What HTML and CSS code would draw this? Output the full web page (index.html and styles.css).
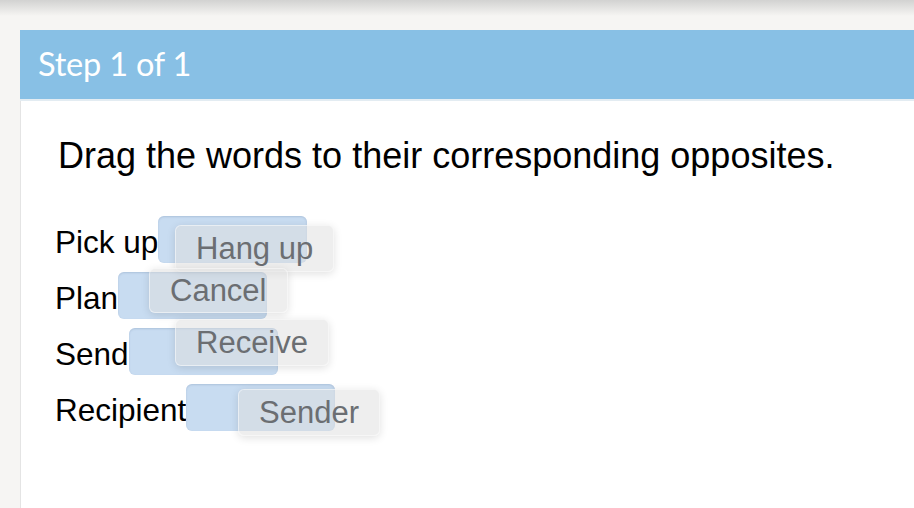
FILE: index.html
```html
<!DOCTYPE html>
<html lang="en">
<head>
  <meta charset="UTF-8" />
  <title>Match the opposites</title>
  <link rel="stylesheet" href="styles.css">
</head>
<body>
  <div class="top-shadow"></div>

  <div class="panel">
    <div class="panel-head">Step 1 of 1</div>
    <div class="panel-body">
      <p class="prompt">Drag the words to their corresponding opposites.</p>

      <div class="pairs">
        <div class="pair">
          <span class="word">Pick up</span>
          <span class="slot"></span>
        </div>
        <div class="pair">
          <span class="word">Plan</span>
          <span class="slot"></span>
        </div>
        <div class="pair">
          <span class="word">Send</span>
          <span class="slot"></span>
        </div>
        <div class="pair">
          <span class="word">Recipient</span>
          <span class="slot"></span>
        </div>

        <!-- cards mid-drag, floating over the slots -->
        <div class="card card-hang">Hang up</div>
        <div class="card card-cancel">Cancel</div>
        <div class="card card-receive">Receive</div>
        <div class="card card-sender">Sender</div>
      </div>
    </div>
  </div>
</body>
</html>
```

FILE: styles.css
```css
* {
  margin: 0;
  padding: 0;
  box-sizing: border-box;
}
html, body {
  height: 100%;
  overflow: hidden;
}
body {
  background: #f6f5f3;
  font-family: "Liberation Sans", Arial, sans-serif;
  position: relative;
}
.top-shadow {
  position: absolute;
  top: 0;
  left: 0;
  right: 0;
  height: 16px;
  background: linear-gradient(#d2d2d1, #f6f5f3);
}
.panel {
  margin: 30px 0 0 20px;
  height: 478px;
  background: #fff;
  border-left: 1px solid #e4e4e4;
  position: relative;
}
.panel-head {
  height: 71px;
  margin-left: -1px;
  background: #88c0e5;
  border-bottom: 2px solid #e3ecf2;
  color: #fff;
  font-family: Lato, "Open Sans", sans-serif;
  font-size: 32.5px;
  letter-spacing: -0.2px;
  padding: 14px 0 0 18px;
}
.panel-body {
  padding: 34px 0 0 34px;
}
.prompt {
  font-size: 36px;
  color: #000;
  margin-left: 3px;
}
.pairs {
  position: relative;
  margin-top: 39px;
  display: flex;
  flex-direction: column;
  gap: 9px;
}
.pair {
  display: flex;
  align-items: center;
  height: 47px;
}
.word {
  font-size: 31.5px;
  color: #000;
  padding-top: 6px;
}
.slot {
  width: 149px;
  height: 47px;
  border-radius: 6px;
  background: #c8dcf1;
  box-shadow: inset 0 1px 2px rgba(90, 120, 160, 0.25);
}
.card {
  position: absolute;
  height: 47px;
  padding: 0 20px;
  display: flex;
  align-items: center;
  font-size: 31px;
  color: #6b6e72;
  background: rgba(222, 222, 222, 0.5);
  border: 1px solid rgba(255, 255, 255, 0.5);
  border-radius: 6px;
  box-shadow: 0 2px 8px rgba(0, 0, 0, 0.12);
}
.card-hang {
  left: 120px;
  top: 9px;
}
.card-cancel {
  left: 94px;
  top: 52px;
  height: 45px;
}
.card-receive {
  left: 120px;
  top: 103px;
}
.card-sender {
  left: 183px;
  top: 173px;
}
```
